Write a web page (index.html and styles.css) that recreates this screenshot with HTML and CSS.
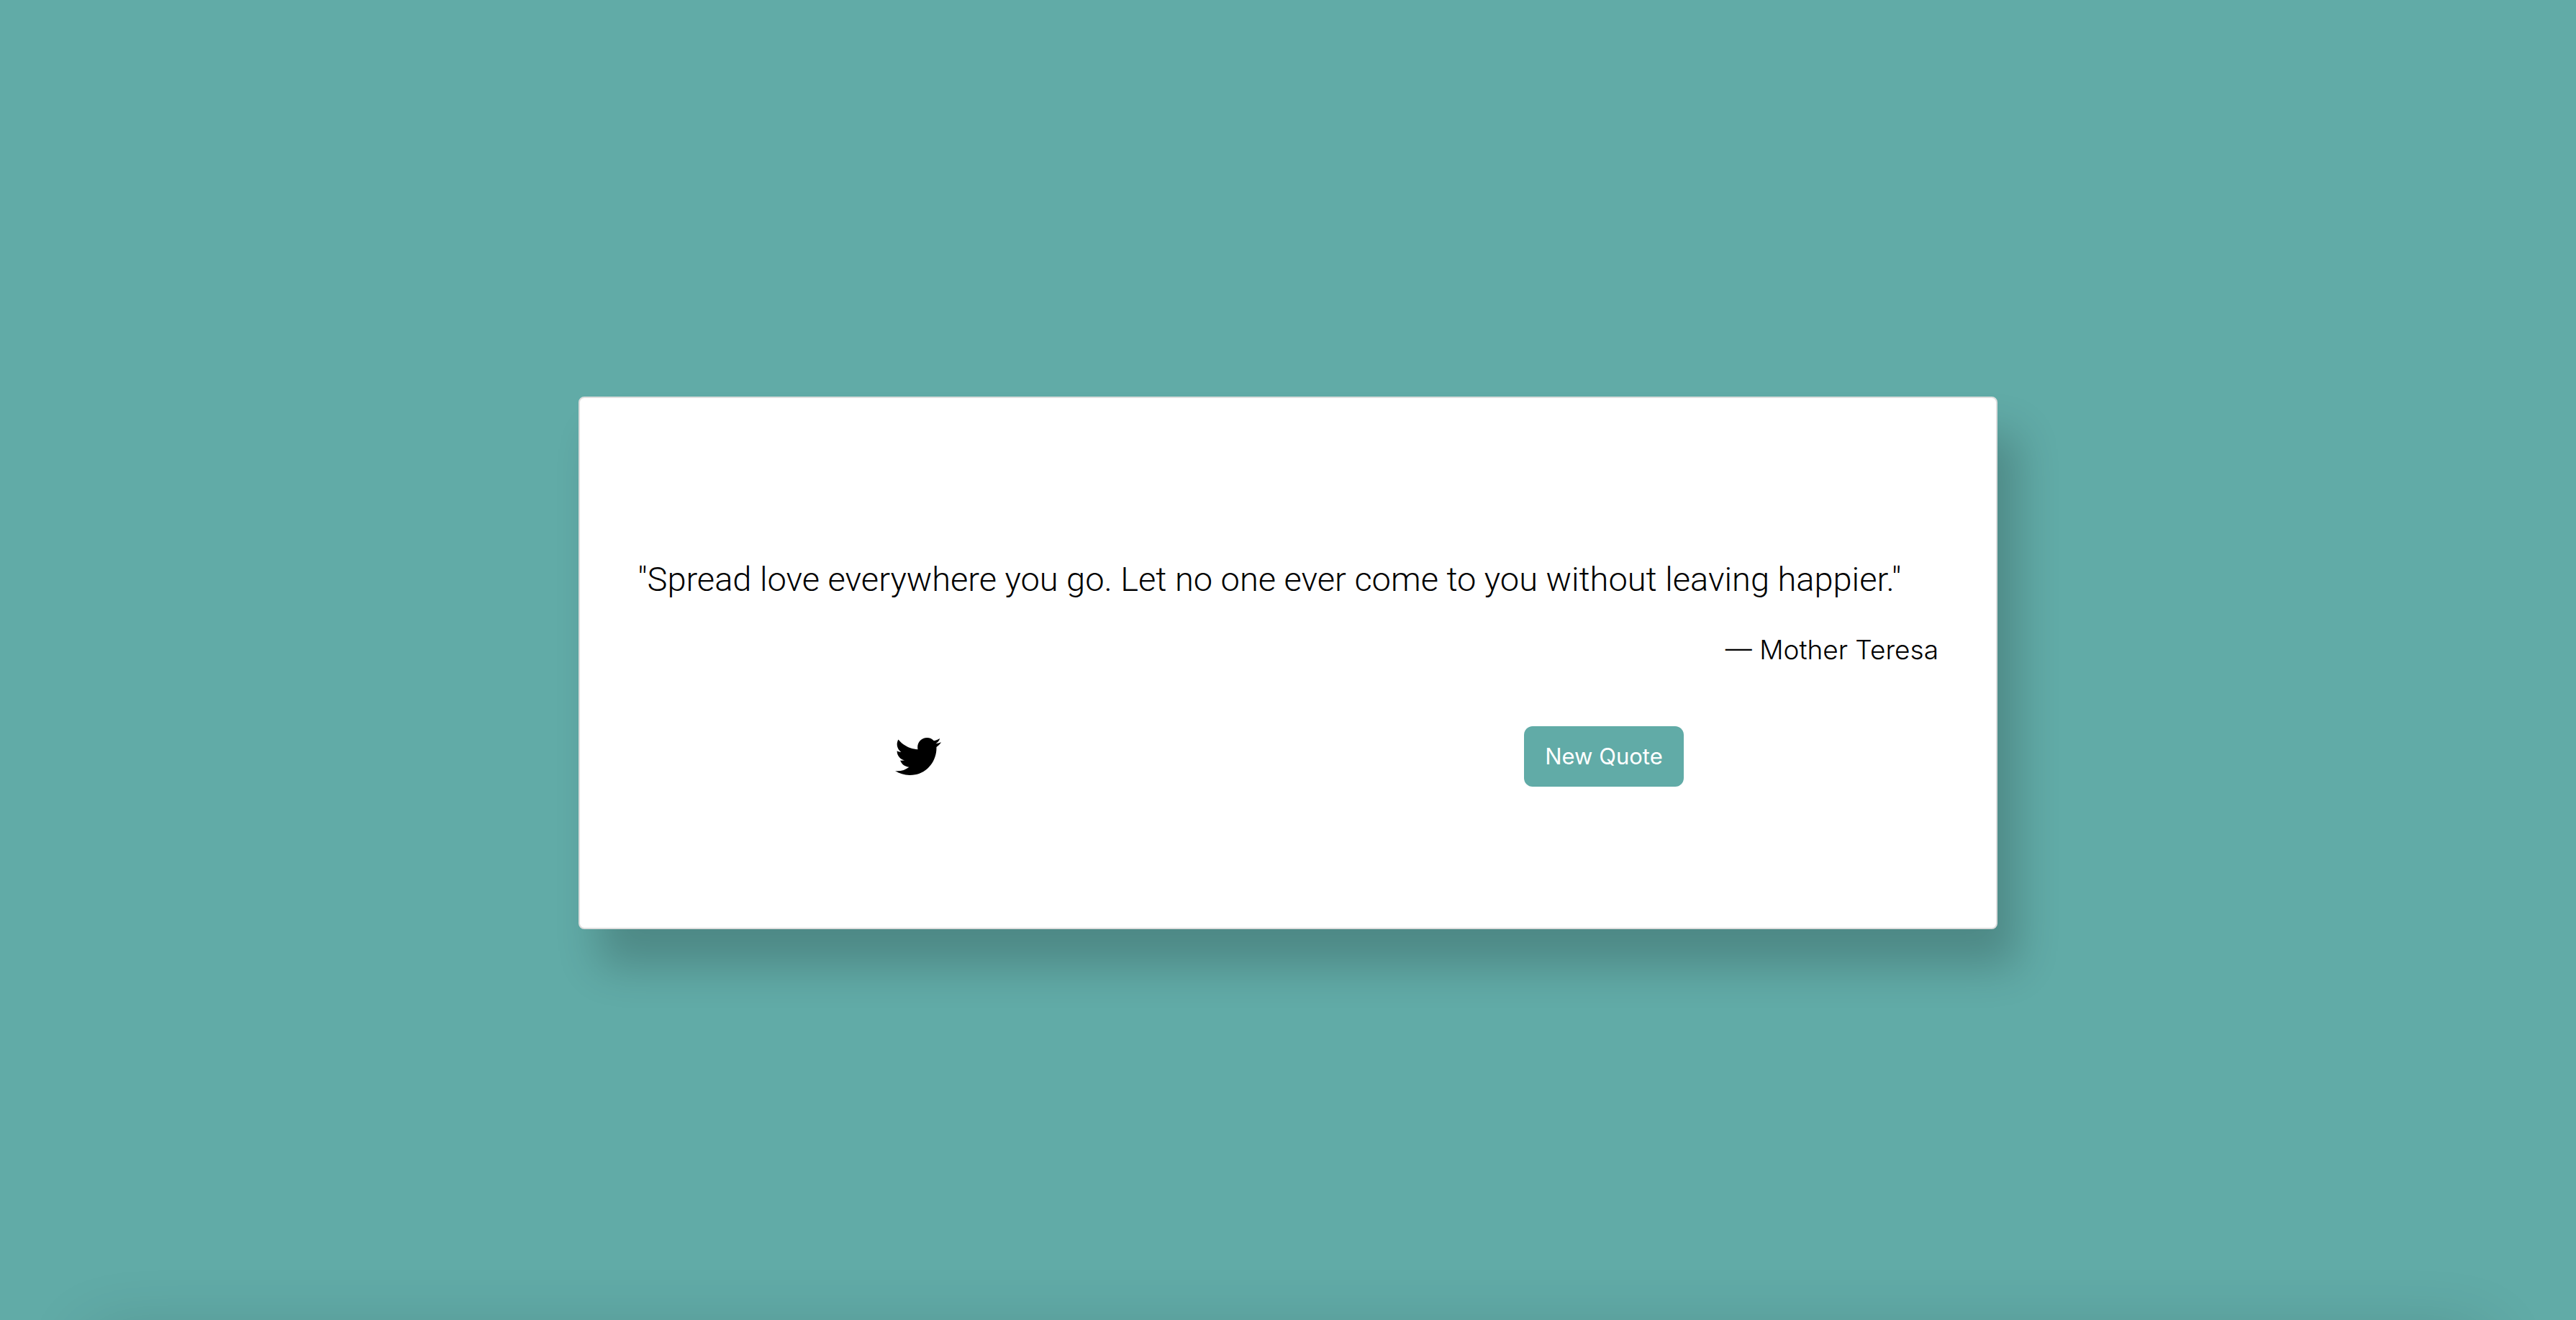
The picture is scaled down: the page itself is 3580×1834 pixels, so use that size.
FILE: index.html
```html
<!DOCTYPE html>
<html lang="en">
<head>
<meta charset="utf-8">
<meta name="viewport" content="width=device-width, initial-scale=1">
<title>Quote Machine</title>
<link rel="stylesheet" href="styles.css">
</head>
<body>
<main class="stage">
  <section class="card">
    <figure class="quote">
      <blockquote class="quote-text">"Spread love everywhere you go. Let no one ever come to you without leaving happier."</blockquote>
      <figcaption class="quote-author">— Mother Teresa</figcaption>
    </figure>
    <div class="actions">
      <a class="tweet" href="#" aria-label="Tweet this quote">
        <svg class="tweet-icon" viewBox="0 0 512 512" aria-hidden="true"><path d="M459.37 151.716c.325 4.548.325 9.097.325 13.645 0 138.72-105.583 298.558-298.558 298.558-59.452 0-114.68-17.219-161.137-47.106 8.447.974 16.568 1.299 25.34 1.299 49.055 0 94.213-16.568 130.274-44.832-46.132-.975-84.792-31.188-98.112-72.772 6.498.974 12.995 1.624 19.818 1.624 9.421 0 18.843-1.3 27.614-3.573-48.081-9.747-84.143-51.98-84.143-102.985v-1.299c13.969 7.797 30.214 12.67 47.431 13.319-28.264-18.843-46.781-51.005-46.781-87.391 0-19.492 5.197-37.36 14.294-52.954 51.655 63.675 129.3 105.258 216.365 109.807-1.624-7.797-2.599-15.918-2.599-24.04 0-57.828 46.782-104.934 104.934-104.934 30.213 0 57.502 12.67 76.67 33.137 23.715-4.548 46.456-13.32 66.599-25.34-7.798 24.366-24.366 44.833-46.132 57.827 21.117-2.273 41.584-8.122 60.426-16.243-14.292 20.791-32.161 39.308-52.628 54.253z"/></svg>
      </a>
      <button class="new-quote" type="button">New Quote</button>
    </div>
  </section>
</main>
<footer class="page-edge"></footer>
</body>
</html>
```
FILE: styles.css
```css
* {
  box-sizing: border-box;
}

body {
  margin: 0;
  min-height: 100vh;
  display: flex;
  flex-direction: column;
  overflow: hidden;
  background: #61aba7;
  color: #000;
  font-family: Inter, "Liberation Sans", sans-serif;
}

.stage {
  flex: 1;
  display: flex;
  align-items: center;
  justify-content: center;
  padding: 8px 24px 0;
}

.card {
  width: 100%;
  max-width: 1972px;
  padding: 216px 80px 196px;
  background: #fff;
  border: 2px solid #dedede;
  border-radius: 8px;
  box-shadow: 28px 52px 60px rgba(0, 0, 0, 0.2);
}

.quote {
  margin: 0;
  font-weight: 300;
}

.quote-text {
  margin: 0;
  font-family: Roboto, Inter, sans-serif;
  font-size: 47px;
  line-height: 72px;
}

.quote-author {
  margin-top: 32px;
  font-size: 37px;
  line-height: 60px;
  text-align: right;
}

.actions {
  display: flex;
  align-items: center;
  justify-content: space-between;
  margin-top: 76px;
  padding: 0 354px 0 336px;
}

.tweet {
  display: flex;
  padding: 0 22px;
  color: #000;
}

.tweet-icon {
  width: 64px;
  height: 64px;
  fill: currentColor;
}

.new-quote {
  width: 222px;
  height: 84px;
  padding: 0;
  border: 0;
  border-radius: 12px;
  background: #61aba7;
  color: #fff;
  font: 400 31px/48px Inter, "Liberation Sans", sans-serif;
}

/* Soft shade rising from the bottom edge of the page */
.page-edge {
  height: 4px;
  margin: 0 160px -4px;
  box-shadow: 0 60px 100px 32px rgba(0, 0, 0, 0.2);
}
```
